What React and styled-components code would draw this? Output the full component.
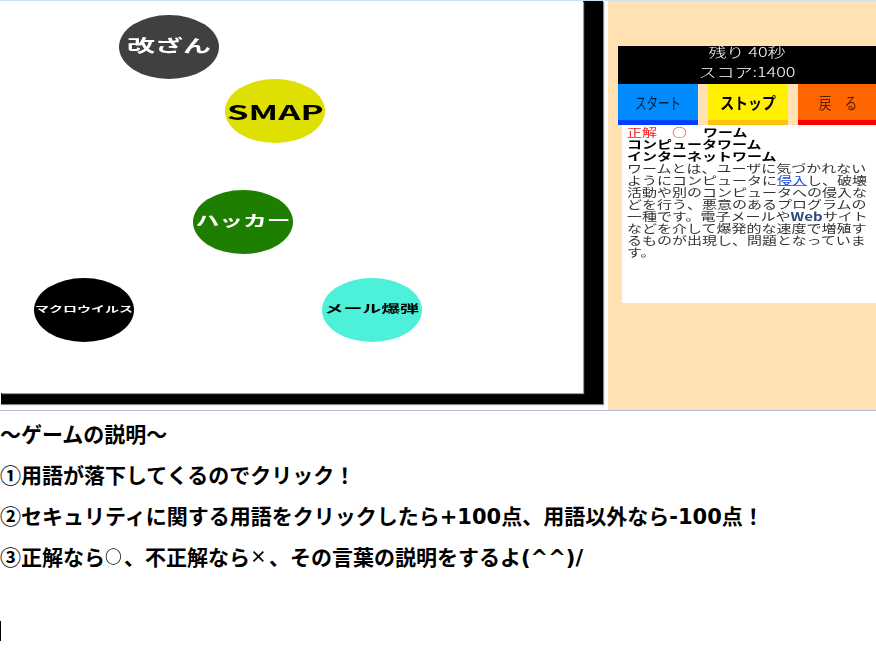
import styled, { createGlobalStyle } from 'styled-components';

const GlobalStyle = createGlobalStyle`
    html, body {
        margin: 0;
        padding: 0;
        background: #fff;
        overflow: hidden;
    }
    body {
        font-family: "Noto Sans CJK JP", "Liberation Sans", sans-serif;
        color: #000;
    }
`;

const Page = styled.div`
    width: 876px;
    height: 649px;
    overflow: hidden;
    border-top: 1px solid #cfe0f2;
    box-sizing: border-box;
`;

const Top = styled.div`
    display: flex;
    height: 409px;
`;

const GameFrame = styled.div`
    width: 603px;
    height: 403px;
    box-sizing: border-box;
    background: #000;
    border-left: 1px solid #fff;
    padding: 0 20px 11px 0;
    box-shadow: 1px 1px 1px #888;
`;

const Field = styled.div`
    position: relative;
    height: 100%;
    background: #fff;
    overflow: hidden;
    box-shadow: 1px 1px 1px #999;
`;

const Ball = styled.div`
    position: absolute;
    width: 100px;
    height: 64px;
    padding-bottom: ${(p) => p.$lift || 0}px;
    box-sizing: border-box;
    border-radius: 50%;
    display: flex;
    align-items: center;
    justify-content: center;
    background: ${(p) => p.$bg};
    color: ${(p) => p.$fg};
`;

const BallText = styled.span`
    font-size: ${(p) => p.$size}px;
    font-weight: 700;
    white-space: nowrap;
    transform: scale(${(p) => p.$stretch || 1.4}, ${(p) => p.$squash || 0.85});
    filter: blur(0.3px);
`;

const Side = styled.div`
    margin-left: 5px;
    flex: 1;
    background: #ffe1b3;
    padding: 45px 0 0 10px;
    min-width: 0;
`;

const Status = styled.div`
    display: flow-root;
    height: 38px;
    background: #000;
    color: #fff;
    text-align: center;
    font-weight: 300;
    font-size: 18px;
    line-height: 20px;
`;

const StatusLine = styled.div`
    transform: scaleY(0.72);
    filter: blur(0.2px);
    &:first-child {
        margin-top: -5px;
    }
`;

const Buttons = styled.div`
    display: flex;
    gap: 10px;
`;

const GameButton = styled.div`
    width: 80px;
    height: 36px;
    flex: none;
    border-bottom: 5px solid ${(p) => p.$edge};
    background: ${(p) => p.$bg};
    color: ${(p) => p.$fg || '#0b2238'};
    font-size: 16px;
    font-weight: ${(p) => (p.$bold ? 700 : 400)};
    line-height: 37px;
    text-align: center;
    white-space: pre;
`;

const ButtonLabel = styled.span`
    display: inline-block;
    transform: scaleX(${(p) => p.$squeeze});
`;

const Answer = styled.div`
    margin-left: 4px;
    height: 177px;
    background: #fff;
    padding: 1px 0 0 5px;
    overflow: hidden;
`;

const AnswerBody = styled.div`
    width: 244px;
    font-size: 15px;
    line-height: 16px;
    color: #333;
    transform: scaleY(0.75);
    transform-origin: top left;
    filter: blur(0.3px);
`;

const Verdict = styled.span`
    color: #f02020;
    font-weight: 400;
    margin-right: 16px;
`;

const Term = styled.div`
    font-weight: 700;
    color: #000;
`;

const TermLink = styled.span`
    color: #1a4fe0;
    text-decoration: underline;
`;

const WebWord = styled.span`
    font-weight: 700;
    color: #2a4a7a;
`;

const Rule = styled.div`
    height: 1px;
    background: #b8bcd8;
`;

const Guide = styled.div`
    padding-top: 2px;
`;

const GuideLine = styled.p`
    margin: 0;
    height: 41px;
    font-size: 21px;
    font-weight: 700;
    line-height: 41px;
    white-space: nowrap;
`;

const Latin = styled.span`
    font-family: "DejaVu Sans", sans-serif;
`;

const Mark = styled.span`
    display: inline-block;
    width: 19px;
    transform: scale(0.8);
    transform-origin: left center;
`;

const Caret = styled.div`
    width: 1px;
    height: 20px;
    margin-top: 44px;
    background: #000;
`;

const balls = [
    { text: '改ざん', x: 118, y: 14, bg: '#404040', fg: '#fff', size: 20, lift: 5 },
    { text: 'SMAP', x: 224, y: 78, bg: '#dde000', fg: '#000', size: 21, stretch: 1.65, squash: 0.95 },
    { text: 'ハッカー', x: 192, y: 189, bg: '#1e7e00', fg: '#fff', size: 17, lift: 6 },
    { text: 'マクロウイルス', x: 33, y: 277, bg: '#000', fg: '#fff', size: 10, lift: 3 },
    { text: 'メール爆弾', x: 321, y: 277, bg: '#4df0d8', fg: '#000', size: 13.5, lift: 5 },
];

const App = () => {
    return (
        <Page>
            <GlobalStyle />
            <Top>
                <GameFrame>
                    <Field>
                        {balls.map((b) => (
                            <Ball key={b.text} $bg={b.bg} $fg={b.fg} $lift={b.lift} style={{ left: b.x, top: b.y }}>
                                <BallText $size={b.size} $stretch={b.stretch} $squash={b.squash}>{b.text}</BallText>
                            </Ball>
                        ))}
                    </Field>
                </GameFrame>
                <Side>
                    <Status>
                        <StatusLine>残り 40秒</StatusLine>
                        <StatusLine>スコア:1400</StatusLine>
                    </Status>
                    <Buttons>
                        <GameButton $bg="#008cff" $edge="#0040ff">
                            <ButtonLabel $squeeze={0.72}>スタート</ButtonLabel>
                        </GameButton>
                        <GameButton $bg="#fff000" $edge="#ffc20e" $fg="#000" $bold>
                            <ButtonLabel $squeeze={0.87}>ストップ</ButtonLabel>
                        </GameButton>
                        <GameButton $bg="#ff6600" $edge="#ff0000" $fg="#5a2000">
                            <ButtonLabel $squeeze={0.8}>{'戻　る'}</ButtonLabel>
                        </GameButton>
                    </Buttons>
                    <Answer>
                        <AnswerBody>
                            <Term><Verdict>正解　○</Verdict>ワーム</Term>
                            <Term>コンピュータワーム</Term>
                            <Term>インターネットワーム</Term>
                            ワームとは、ユーザに気づかれないようにコンピュータに<TermLink>侵入</TermLink>し、破壊活動や別のコンピュータへの侵入などを行う、悪意のあるプログラムの一種です。電子メールや<WebWord>Web</WebWord>サイトなどを介して爆発的な速度で増殖するものが出現し、問題となっています。
                        </AnswerBody>
                    </Answer>
                </Side>
            </Top>
            <Rule />
            <Guide>
                <GuideLine>～ゲームの説明～</GuideLine>
                <GuideLine>①用語が落下してくるのでクリック！</GuideLine>
                <GuideLine>②セキュリティに関する用語をクリックしたら<Latin>+100</Latin>点、用語以外なら<Latin>-100</Latin>点！</GuideLine>
                <GuideLine>③正解なら<Mark>○</Mark>、不正解なら<Mark>×</Mark>、その言葉の説明をするよ<Latin>(^^)/</Latin></GuideLine>
            </Guide>
            <Caret />
        </Page>
    );
};

export default App;
